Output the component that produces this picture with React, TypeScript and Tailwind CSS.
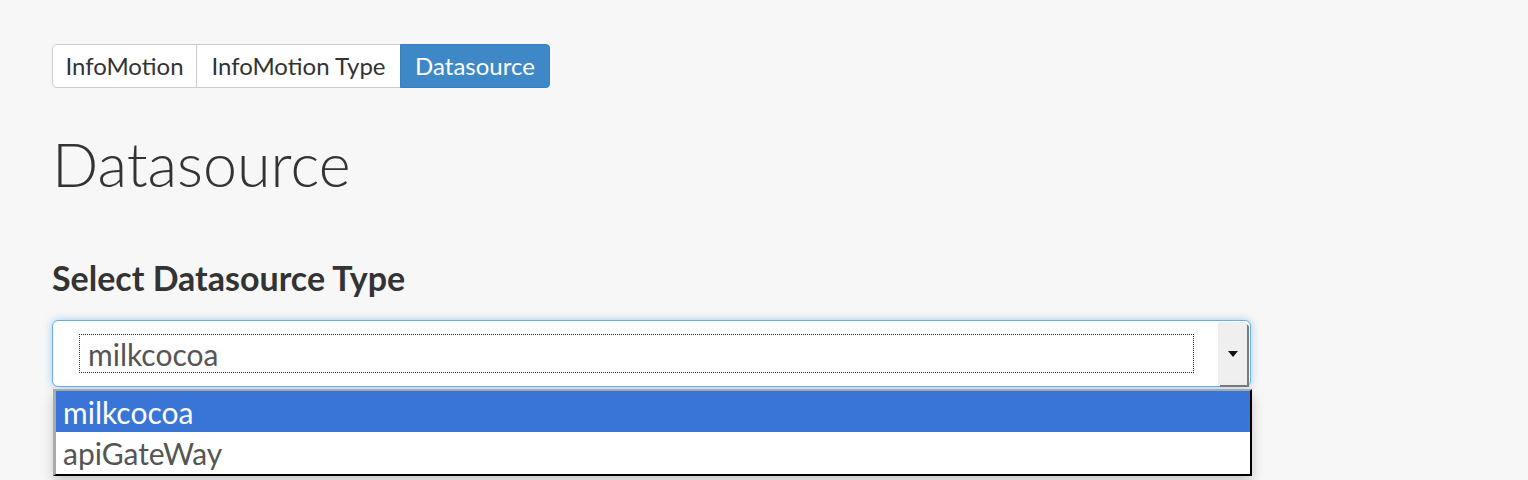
function App() {
  return (
    <main
      className="min-h-screen w-full bg-[#f7f7f7] text-[#333]"
      style={{ fontFamily: "Lato, 'Open Sans', sans-serif" }}
    >
      <div className="pl-[52px] pt-[44px] pr-[277px]">
        <div className="inline-flex h-[44px] rounded-[5px] border border-[#cccccc] bg-white text-[24px] leading-none">
          <button className="w-[144px] border-r border-[#cccccc] text-[#333] rounded-l-[4px]">
            InfoMotion
          </button>
          <button className="w-[203px] text-[#333]">InfoMotion Type</button>
          <button className="w-[150px] bg-[#3f88c8] text-white rounded-r-[4px] -my-px -mr-px border border-[#3a80bd]">
            Datasource
          </button>
        </div>

        <h1 className="mt-[36px] text-[61px] font-light leading-[80px] text-[#333]">
          Datasource
        </h1>

        <h3 className="mt-[54px] text-[34px] font-bold leading-[40px] text-[#333]">
          Select Datasource Type
        </h3>

        <div className="relative mt-[22px]">
          <div className="flex h-[67px] items-center rounded-[6px] border border-[#66afe9] bg-white pl-[26px] pr-[3px] shadow-[0_0_8px_rgba(102,175,233,0.6)]">
            <div className="flex h-[39px] flex-1 items-end border border-dotted border-[#333] pl-[8px] text-[30px] leading-[36px] text-[#555]">
              milkcocoa
            </div>
            <div className="ml-[24px] flex h-[63px] w-[29px] items-center justify-center bg-[#efefef] shadow-[2px_2px_0_#7a7a7a] rounded-tr-[4px]">
              <svg width="10" height="6" viewBox="0 0 10 6">
                <path d="M0 0 L10 0 L5 6 Z" fill="#111" />
              </svg>
            </div>
          </div>

          <ul className="absolute left-px right-[-1px] top-[69px] border-t-2 border-l-[3px] border-t-[#aaaaaa] border-l-[#aaaaaa] border-r-2 border-b-2 border-r-black border-b-black bg-white text-[30px] leading-[42px] shadow-[0_6px_12px_rgba(0,0,0,0.2)]">
            <li className="h-[41px] bg-[#3875d7] pl-[7px] text-white">milkcocoa</li>
            <li className="h-[42px] pl-[7px] text-[#555]">apiGateWay</li>
          </ul>
        </div>
      </div>
    </main>
  );
}

export default App;
